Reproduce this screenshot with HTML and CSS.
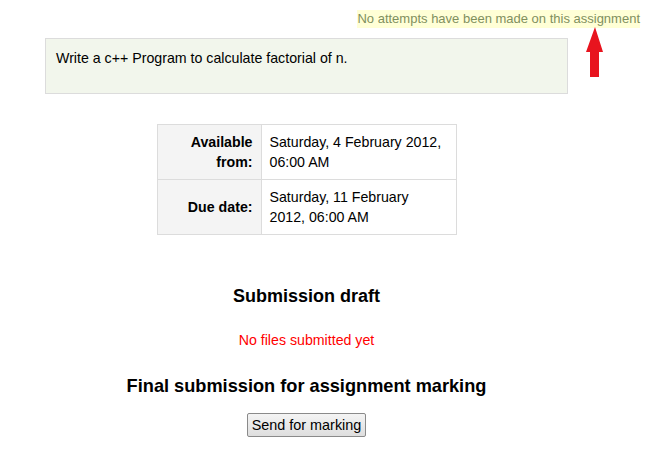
FILE: index.html
```html
<!DOCTYPE html>
<html>
<head>
<meta charset="utf-8">
<link rel="stylesheet" href="styles.css">
</head>
<body>
<div class="page">
  <div class="notice-row"><span class="notice">No attempts have been made on this assignment</span></div>
  <div class="main">
    <div class="intro">Write a c++ Program to calculate factorial of n.</div>
    <table class="dates">
      <tr><th>Available from:</th><td>Saturday, 4 February 2012, 06:00 AM</td></tr>
      <tr><th>Due date:</th><td>Saturday, 11 February 2012, 06:00 AM</td></tr>
    </table>
    <h3 class="h-draft">Submission draft</h3>
    <p class="nofiles">No files submitted yet</p>
    <h3 class="h-final">Final submission for assignment marking</h3>
    <div class="btn-row"><button class="btn">Send for marking</button></div>
  </div>
  <svg class="arrow" width="20" height="52" viewBox="0 0 20 52">
    <polygon points="10,0 18,25 14,25 14,50 5,50 5,25 1,25" fill="#e8141e"/>
  </svg>
</div>
</body>
</html>
```
FILE: styles.css
```css
html, body { margin: 0; padding: 0; background: #fff; }
body { font-family: "Liberation Sans", Arial, sans-serif; font-size: 14.2px; color: #000; }
.page { position: relative; width: 645px; height: 451px; }
.notice-row { display: flex; justify-content: flex-end; padding: 10px 5px 0 0; height: 18px; }
.notice { background: #ffffd6; color: #7f8f5e; font-size: 13px; line-height: 17px; }
.main { margin-left: 45px; width: 523px; display: flex; flex-direction: column; align-items: center; }
.intro { align-self: stretch; margin-top: 10px; height: 56px; box-sizing: border-box; background: #f2f6ec; border: 1px solid #dcdcdc; padding: 11px 10px; line-height: 16px; }
.dates { margin-top: 30px; border-collapse: collapse; width: 300px; }
.dates th, .dates td { border: 1px solid #dcdcdc; padding: 7px 8px; line-height: 20px; vertical-align: middle; font-weight: normal; }
.dates th { background: #f4f4f4; font-weight: bold; text-align: right; width: 87px; }
.dates td { text-align: left; }
.h-draft { font-size: 18px; margin: 50px 0 0 0; line-height: 22px; }
.nofiles { color: #ff0000; margin: 25px 0 0 0; line-height: 16px; }
.h-final { font-size: 18.2px; margin: 27px 0 0 0; line-height: 22px; }
.btn-row { margin-top: 16px; }
.btn { font-family: "Liberation Sans", Arial, sans-serif; font-size: 14.4px; padding: 3px 4px; border: 1px solid #8a8a8a; border-radius: 2px; background: linear-gradient(#f4f4f4, #dedede); color: #000; }
.arrow { position: absolute; left: 585px; top: 27px; }
```
